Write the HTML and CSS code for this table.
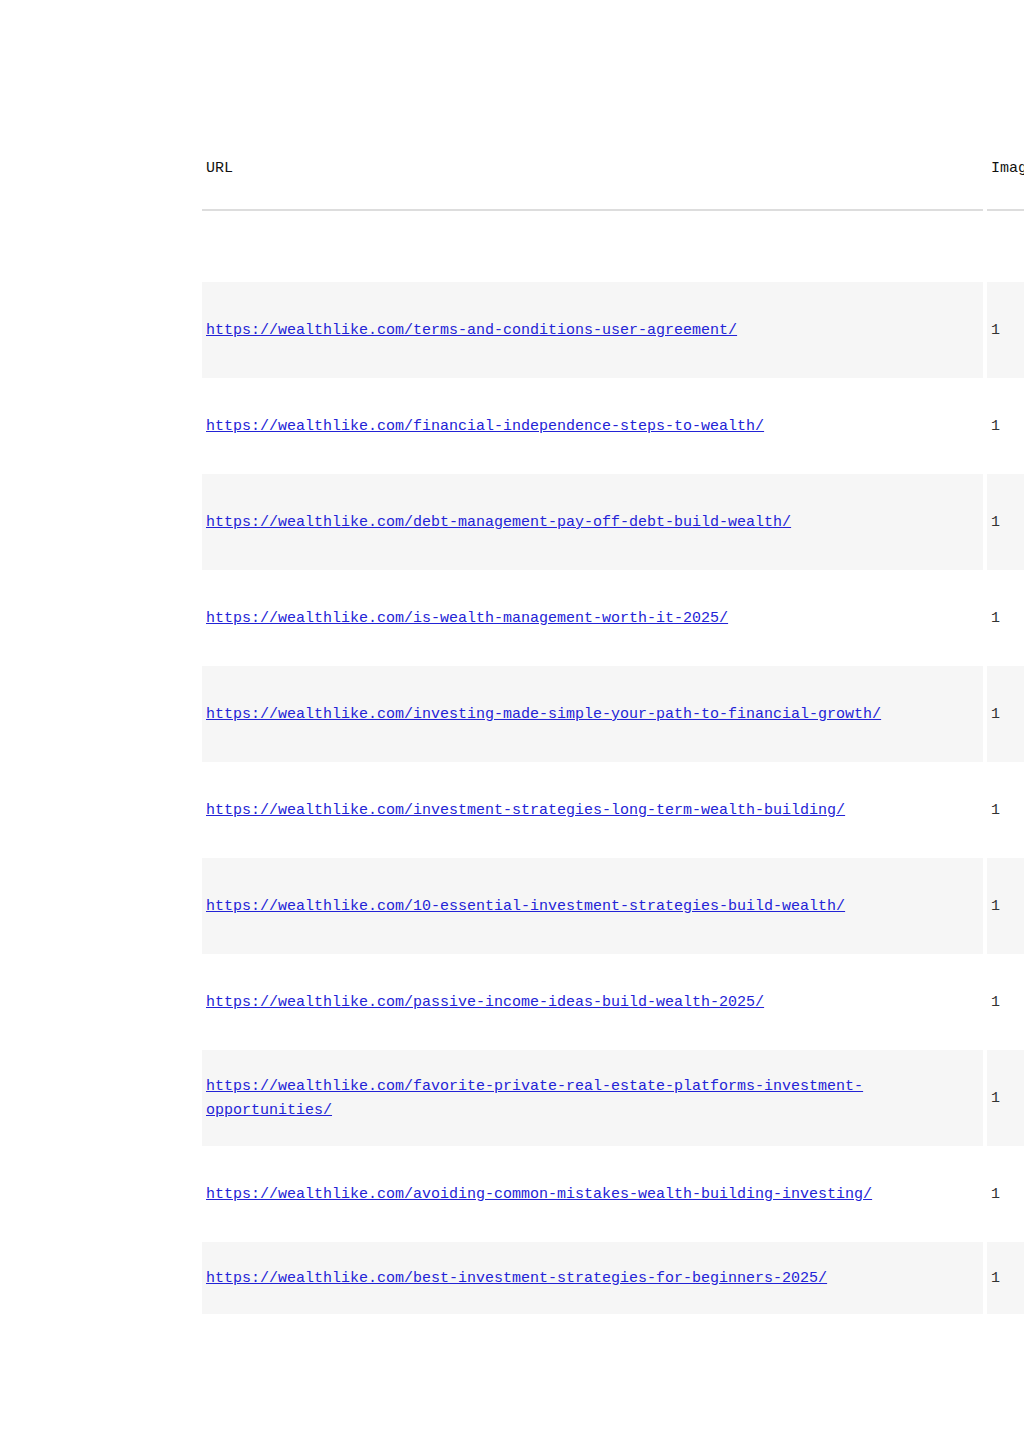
FILE: index.html
```html
<!DOCTYPE html>
<html lang="en">
<head>
    <meta charset="UTF-8">
    <meta name="viewport" content="width=device-width, initial-scale=1.0">
    <title>XML Sitemap</title>
    <link rel="stylesheet" href="styles.css">
</head>
<body>
    <div class="content">
        <table class="sitemap">
            <thead>
                <tr>
                    <th class="col-url">URL</th>
                    <th class="col-images">Images</th>
                    <th class="col-mod">Last Mod.</th>
                </tr>
            </thead>
            <tbody>
                <tr class="spacer"><td colspan="3"></td></tr>
                <tr class="odd">
                    <td><a href="https://wealthlike.com/terms-and-conditions-user-agreement/">https://wealthlike.com/terms-and-conditions-user-agreement/</a></td>
                    <td>1</td>
                    <td>2025-02-10 09:14 +00:00</td>
                </tr>
                <tr>
                    <td><a href="https://wealthlike.com/financial-independence-steps-to-wealth/">https://wealthlike.com/financial-independence-steps-to-wealth/</a></td>
                    <td>1</td>
                    <td>2025-02-08 14:02 +00:00</td>
                </tr>
                <tr class="odd">
                    <td><a href="https://wealthlike.com/debt-management-pay-off-debt-build-wealth/">https://wealthlike.com/debt-management-pay-off-debt-build-wealth/</a></td>
                    <td>1</td>
                    <td>2025-02-07 11:45 +00:00</td>
                </tr>
                <tr>
                    <td><a href="https://wealthlike.com/is-wealth-management-worth-it-2025/">https://wealthlike.com/is-wealth-management-worth-it-2025/</a></td>
                    <td>1</td>
                    <td>2025-02-05 16:30 +00:00</td>
                </tr>
                <tr class="odd">
                    <td><a href="https://wealthlike.com/investing-made-simple-your-path-to-financial-growth/">https://wealthlike.com/investing-made-simple-your-path-to-financial-growth/</a></td>
                    <td>1</td>
                    <td>2025-02-03 10:12 +00:00</td>
                </tr>
                <tr>
                    <td><a href="https://wealthlike.com/investment-strategies-long-term-wealth-building/">https://wealthlike.com/investment-strategies-long-term-wealth-building/</a></td>
                    <td>1</td>
                    <td>2025-02-01 08:50 +00:00</td>
                </tr>
                <tr class="odd">
                    <td><a href="https://wealthlike.com/10-essential-investment-strategies-build-wealth/">https://wealthlike.com/10-essential-investment-strategies-build-wealth/</a></td>
                    <td>1</td>
                    <td>2025-01-30 13:21 +00:00</td>
                </tr>
                <tr>
                    <td><a href="https://wealthlike.com/passive-income-ideas-build-wealth-2025/">https://wealthlike.com/passive-income-ideas-build-wealth-2025/</a></td>
                    <td>1</td>
                    <td>2025-01-28 17:05 +00:00</td>
                </tr>
                <tr class="odd">
                    <td><a href="https://wealthlike.com/favorite-private-real-estate-platforms-investment-opportunities/">https://wealthlike.com/favorite-private-real-estate-platforms-investment-opportunities/</a></td>
                    <td>1</td>
                    <td>2025-01-26 12:40 +00:00</td>
                </tr>
                <tr>
                    <td><a href="https://wealthlike.com/avoiding-common-mistakes-wealth-building-investing/">https://wealthlike.com/avoiding-common-mistakes-wealth-building-investing/</a></td>
                    <td>1</td>
                    <td>2025-01-24 09:33 +00:00</td>
                </tr>
                <tr class="odd last">
                    <td><a href="https://wealthlike.com/best-investment-strategies-for-beginners-2025/">https://wealthlike.com/best-investment-strategies-for-beginners-2025/</a></td>
                    <td>1</td>
                    <td>2025-01-22 15:18 +00:00</td>
                </tr>
            </tbody>
        </table>
    </div>
</body>
</html>
```

FILE: styles.css
```css
/* Page base */
body {
    margin: 0;
    background-color: #fff;
    color: #333;
    font-family: "Liberation Mono", monospace;
    font-size: 15px;
    line-height: 24px;
    overflow-x: hidden;
}

.content {
    padding: 131px 0 40px 198px;
}

/* Sitemap table - wider than the window, the right side runs off screen */
.sitemap {
    width: 1300px;
    border-collapse: separate;
    border-spacing: 4px 0;
    table-layout: fixed;
}

.sitemap th {
    text-align: left;
    font-weight: normal;
    color: #111;
    padding: 26px 4px 28px;
    border-bottom: 2px solid #ddd;
}

.col-url {
    width: 773px;
}

.col-images {
    width: 160px;
}

.sitemap td {
    height: 94px;
    padding: 2px 4px 0;
    vertical-align: middle;
}

.sitemap .spacer td {
    height: 71px;
    padding: 0;
}

.sitemap .last td {
    height: 70px;
}

.sitemap .odd td {
    background-color: #f6f6f6;
}

.sitemap a {
    color: #2323d6;
}
```
